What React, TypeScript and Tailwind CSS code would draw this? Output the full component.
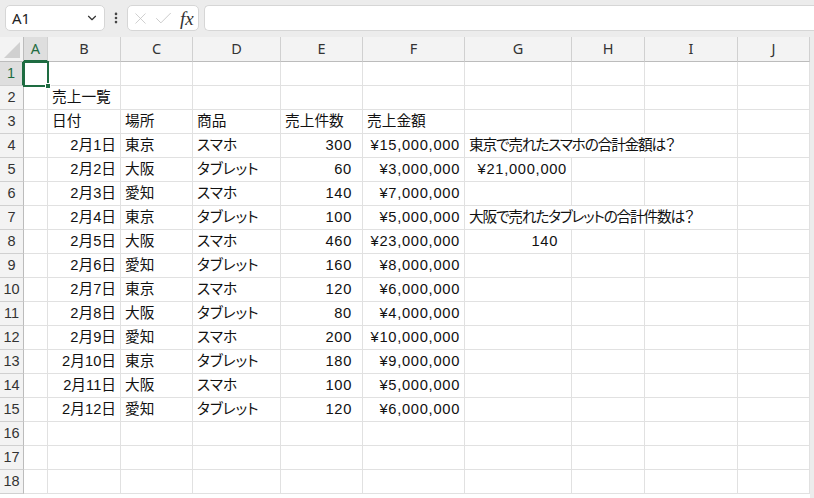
import { ChevronDown, X, Check, EllipsisVertical } from 'lucide-react';

const COLS = ['A', 'B', 'C', 'D', 'E', 'F', 'G', 'H', 'I', 'J'];

type Cell = { v: string; right?: boolean; num?: boolean; pr?: string; span?: boolean };

const places = ['東京', '大阪', '愛知'];
const counts = [300, 60, 140, 100, 460, 160, 120, 80, 200, 180, 100, 120];
const amounts = [15, 3, 7, 5, 23, 8, 6, 4, 10, 9, 5, 6];

const yen = (m: number) => '¥' + (m * 1000000).toLocaleString('en-US');

// row index (1-based) -> column letter -> cell
const sheet: Record<number, Record<string, Cell>> = {
  2: { B: { v: '売上一覧' } },
  3: {
    B: { v: '日付' },
    C: { v: '場所' },
    D: { v: '商品' },
    E: { v: '売上件数' },
    F: { v: '売上金額' },
  },
};

counts.forEach((c, i) => {
  sheet[i + 4] = {
    B: { v: `2月${i + 1}日`, right: true },
    C: { v: places[i % 3] },
    D: { v: i % 2 === 0 ? 'スマホ' : 'タブレット' },
    E: { v: String(c), right: true, num: true, pr: 'pr-[10px]' },
    F: { v: yen(amounts[i]), right: true, num: true },
  };
});

sheet[4].G = { v: '東京で売れたスマホの合計金額は？', span: true };
sheet[5].G = { v: '¥21,000,000', right: true, num: true };
sheet[7].G = { v: '大阪で売れたタブレットの合計件数は？', span: true };
sheet[8].G = { v: '140', right: true, num: true, pr: 'pr-[13px]' };

function Toolbar() {
  return (
    <div className="h-[37px] bg-[#ececec] flex items-start pt-[5px] pl-[5px]">
      <div className="w-[100px] h-[26px] bg-white border border-[#d6d6d6] rounded-[5px] flex items-center justify-between pl-[6px] pr-[5px]">
        <span className="text-[15px] text-[#222]" style={{ fontFamily: '"Noto Sans", sans-serif' }}>A1</span>
        <ChevronDown className="w-[14px] h-[14px] text-[#333]" strokeWidth={2} />
      </div>
      <div className="w-[22px] h-[26px] flex items-center justify-center">
        <EllipsisVertical className="w-[14px] h-[14px] text-[#444]" strokeWidth={2.5} />
      </div>
      <div className="w-[72px] h-[26px] bg-white border border-[#d6d6d6] rounded-[5px] flex items-center pl-[3px] gap-[3px]">
        <X className="w-[19px] h-[19px] text-[#c4c4c4]" strokeWidth={1} />
        <Check className="w-[21px] h-[21px] text-[#c4c4c4]" strokeWidth={1} />
        <span
          className="italic text-[19px] text-[#333] ml-[3px] leading-none"
          style={{ fontFamily: '"Liberation Serif", serif' }}
        >
          fx
        </span>
      </div>
      <div className="flex-1 ml-[5px] h-[26px] bg-white border border-[#d6d6d6] border-r-0 rounded-l-[5px]" />
    </div>
  );
}

export default function App() {
  const rows = Array.from({ length: 18 }, (_, i) => i + 1);

  return (
    <div
      className="w-[814px] h-[498px] overflow-hidden bg-[#ececec] text-[#111]"
      style={{ fontFamily: '"Liberation Sans", "Noto Sans CJK JP", sans-serif' }}
    >
      <Toolbar />
      <div className="grid grid-cols-[24px_24px_73px_72px_88px_82px_102px_107px_73px_93px_72px] grid-rows-[25px_repeat(19,24px)] bg-white w-[810px]">
        {/* corner */}
        <div className="relative bg-[#f3f3f3] border-r border-b border-[#bcbcbc]">
          <div className="absolute right-[3px] bottom-[3px] w-0 h-0 border-l-[16px] border-l-transparent border-b-[16px] border-b-[#d0d0d0]" />
        </div>
        {COLS.map((c) => (
          <div
            key={c}
            className={`flex items-center justify-center text-[14.5px] border-r border-[#d0d0d0] ${
              c === 'A'
                ? 'bg-[#dedede] text-[#1e6c41] border-b-2 border-b-[#1e6c41]'
                : 'bg-[#f3f3f3] text-[#333] border-b border-b-[#bcbcbc]'
            }`}
            style={{ fontFamily: '"Noto Sans", sans-serif' }}
          >
            {c}
          </div>
        ))}

        {rows.map((r) => {
          const data = sheet[r] || {};
          const cells = [];
          for (let ci = 0; ci < COLS.length; ci++) {
            const col = COLS[ci];
            const cell = data[col];
            if (cell?.span) {
              cells.push(
                <div
                  key={col}
                  className="col-span-3 flex items-center pl-[4px] whitespace-nowrap text-[14.7px] tracking-[-1.2px] [font-feature-settings:'palt'] border-r border-b border-[#e1e1e1]"
                >
                  {cell.v}
                </div>
              );
              ci += 2;
              continue;
            }
            const isA1 = r === 1 && col === 'A';
            cells.push(
              <div
                key={col}
                className={`relative flex items-center whitespace-nowrap text-[14.7px] border-r border-b border-[#e1e1e1] ${
                  cell?.right ? `justify-end ${cell.pr ?? 'pr-[4px]'}` : "pl-[4px] [font-feature-settings:'palt']"
                } ${cell?.num ? 'tracking-[0.7px]' : ''}`}
              >
                {cell?.v}
                {isA1 && (
                  <div className="absolute -left-[1px] -top-[1px] w-[26px] h-[26px] border-2 border-[#1e6c41] z-10">
                    <div className="absolute -right-[4px] -bottom-[4px] w-[6px] h-[6px] bg-[#1e6c41] border border-white" />
                  </div>
                )}
              </div>
            );
          }
          return [
            <div
              key={`h${r}`}
              className={`flex items-center justify-center text-[14.5px] border-b border-[#d0d0d0] ${
                r === 1
                  ? 'bg-[#dedede] text-[#1e6c41] border-r-2 border-r-[#1e6c41]'
                  : 'bg-[#f3f3f3] text-[#333] border-r border-r-[#bcbcbc]'
              }`}
            >
              {r}
            </div>,
            ...cells,
          ];
        })}
      </div>
    </div>
  );
}
